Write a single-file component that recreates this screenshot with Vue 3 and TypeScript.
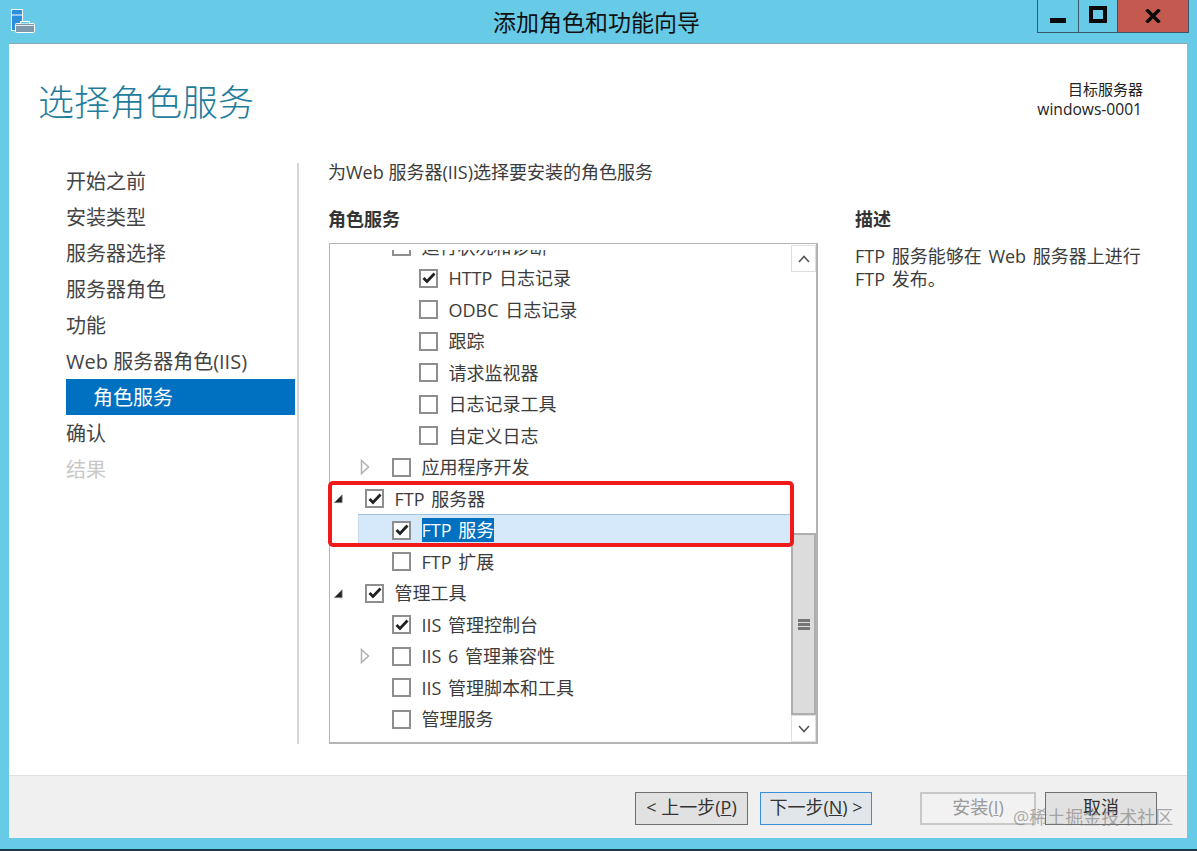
<script setup lang="ts">
interface TreeRow {
  label: string
  depth: number
  arrow?: 'open' | 'closed'
  checked?: boolean
  selected?: boolean
}

const navItems = [
  { label: '开始之前' },
  { label: '安装类型' },
  { label: '服务器选择' },
  { label: '服务器角色' },
  { label: '功能' },
  { label: 'Web 服务器角色(IIS)' },
  { label: '角色服务', active: true },
  { label: '确认' },
  { label: '结果', disabled: true },
]

const rows: TreeRow[] = [
  { label: '运行状况和诊断', depth: 1, arrow: undefined },
  { label: 'HTTP 日志记录', depth: 2, checked: true },
  { label: 'ODBC 日志记录', depth: 2 },
  { label: '跟踪', depth: 2 },
  { label: '请求监视器', depth: 2 },
  { label: '日志记录工具', depth: 2 },
  { label: '自定义日志', depth: 2 },
  { label: '应用程序开发', depth: 1, arrow: 'closed' },
  { label: 'FTP 服务器', depth: 0, arrow: 'open', checked: true },
  { label: 'FTP 服务', depth: 1, checked: true, selected: true },
  { label: 'FTP 扩展', depth: 1 },
  { label: '管理工具', depth: 0, arrow: 'open', checked: true },
  { label: 'IIS 管理控制台', depth: 1, checked: true },
  { label: 'IIS 6 管理兼容性', depth: 1, arrow: 'closed' },
  { label: 'IIS 管理脚本和工具', depth: 1 },
  { label: '管理服务', depth: 1 },
]

const rowIndent = (r: TreeRow) => ({ marginLeft: `${27 * r.depth + 1}px` })
</script>

<template>
  <div class="window">
    <header class="titlebar">
      <svg class="app-icon" width="26" height="26" viewBox="0 0 26 26">
        <rect x="1.5" y="0.5" width="11" height="21" fill="#2b8fdc" stroke="#fff" />
        <line x1="2" y1="6" x2="12" y2="6" stroke="#fff" />
        <rect x="5.5" y="14.5" width="19" height="9" rx="1" fill="#8098ab" stroke="#fff" />
        <path d="M10.500 14.500 V12.500 H19.500 V14.500" fill="#67cbe8" stroke="#fff" />
        <line x1="6" y1="16.500" x2="24" y2="16.500" stroke="#fff" stroke-width="0.8" />
      </svg>
      <div class="window-title">添加角色和功能向导</div>
      <div class="controls">
        <div class="ctl ctl-min"><span class="min-glyph"></span></div>
        <div class="ctl ctl-max"><span class="max-glyph"></span></div>
        <div class="ctl ctl-close">
          <svg width="16" height="14" viewBox="0 0 16 14">
            <path d="M1.500 0.500 L14.500 13.500 M14.500 0.500 L1.500 13.500" stroke="#0a0a0a" stroke-width="3.400" />
          </svg>
        </div>
      </div>
    </header>

    <div class="client">
      <div class="page">
        <div class="page-head">
          <h1 class="page-title">选择角色服务</h1>
          <div class="target">
            <div class="target-label">目标服务器</div>
            <div class="target-name">windows-0001</div>
          </div>
        </div>

        <div class="cols">
          <nav class="nav">
            <div
              v-for="item in navItems"
              :key="item.label"
              class="nav-item"
              :class="{ active: item.active, disabled: item.disabled }"
            >{{ item.label }}</div>
          </nav>

          <section class="content">
            <div class="instruction">为Web 服务器(IIS)选择要安装的角色服务</div>
            <div class="heading">角色服务</div>
            <div class="tree-box">
              <div class="tree-view">
                <div class="tree-rows">
                  <div
                    v-for="r in rows"
                    :key="r.label"
                    class="row"
                    :class="{ selected: r.selected }"
                    :style="rowIndent(r)"
                  >
                    <span class="arrow-slot">
                      <svg v-if="r.arrow === 'open'" width="11" height="11" viewBox="0 0 11 11">
                        <path d="M10 1.500 V10 H1.500 Z" fill="#222" stroke="#777" />
                      </svg>
                      <svg v-else-if="r.arrow === 'closed'" width="10" height="16" viewBox="0 0 10 16">
                        <path d="M1.500 1.500 L8.500 8 L1.500 14.500 Z" fill="#fff" stroke="#b0b0b0" stroke-width="1.500" />
                      </svg>
                    </span>
                    <span class="check">
                      <svg v-if="r.checked" width="14" height="12" viewBox="0 0 14 12">
                        <path d="M1.500 6 L5 9.500 L12.500 1.500" fill="none" stroke="#222" stroke-width="2.800" />
                      </svg>
                    </span>
                    <span class="row-label">{{ r.label }}</span>
                  </div>
                </div>
              </div>
              <div class="scrollbar">
                <div class="sb-btn sb-up">
                  <svg width="12" height="8" viewBox="0 0 12 8">
                    <path d="M1 7 L6 1.500 L11 7" fill="none" stroke="#555" stroke-width="1.600" />
                  </svg>
                </div>
                <div class="sb-track">
                  <div class="sb-thumb">
                    <span class="grip"></span>
                    <span class="grip"></span>
                    <span class="grip"></span>
                  </div>
                </div>
                <div class="sb-btn sb-down">
                  <svg width="12" height="8" viewBox="0 0 12 8">
                    <path d="M1 1 L6 6.500 L11 1" fill="none" stroke="#555" stroke-width="1.600" />
                  </svg>
                </div>
              </div>
              <div class="callout"></div>
            </div>
          </section>

          <aside class="desc">
            <div class="heading desc-heading">描述</div>
            <p class="desc-text">FTP 服务能够在 Web 服务器上进行 FTP 发布。</p>
          </aside>
        </div>
      </div>

      <footer class="footer">
        <button class="btn prev">&lt; 上一步(<u>P</u>)</button>
        <button class="btn next">下一步(<u>N</u>) &gt;</button>
        <button class="btn install" disabled>安装(<u>I</u>)</button>
        <button class="btn cancel">取消</button>
        <div class="watermark">@稀土掘金技术社区</div>
      </footer>
    </div>
    <div class="bottom-edge"></div>
  </div>
</template>

<style>
html, body { margin: 0; padding: 0; background: #67cbe8; }
</style>

<style scoped>
.window {
  width: 1197px;
  height: 851px;
  display: flex;
  flex-direction: column;
  background: #67cbe8;
  overflow: hidden;
  font-family: "Open Sans", "Noto Sans CJK SC", "Noto Sans", sans-serif;
  color: #3c3c3c;
}
.titlebar {
  height: 44px;
  flex: none;
  display: flex;
  align-items: flex-start;
  position: relative;
}
.app-icon { margin: 9px 0 0 10px; flex: none; }
.window-title {
  position: absolute;
  left: 0;
  right: 4px;
  top: 6px;
  text-align: center;
  font-size: 23px;
  line-height: 32px;
  color: #111;
}
.controls {
  margin-left: auto;
  margin-right: 8px;
  display: flex;
  height: 32px;
  border: 1px solid #35596b;
  border-top: none;
  position: relative;
}
.ctl {
  display: flex;
  align-items: center;
  justify-content: center;
  box-sizing: border-box;
}
.ctl-min { width: 41px; border-right: 1px solid #35596b; }
.ctl-max { width: 39px; border-right: 1px solid #35596b; }
.ctl-close { width: 70px; background: #c4594f; }
.min-glyph {
  width: 16px;
  height: 5px;
  background: #0a0a0a;
  margin-top: 9px;
}
.max-glyph {
  width: 18px;
  height: 17px;
  box-sizing: border-box;
  border: 4px solid #0a0a0a;
  margin-top: -3px;
}
.client {
  flex: none;
  height: 794px;
  margin: 0 10px 0 9px;
  display: flex;
  flex-direction: column;
  background: #fff;
  box-shadow: 0 -1px 0 #8aa8b5;
}
.page { flex: 1; display: flex; flex-direction: column; min-height: 0; }
.page-head {
  height: 119px;
  flex: none;
  box-sizing: border-box;
  display: flex;
  justify-content: space-between;
  padding: 34px 44px 0 29px;
}
.page-title {
  margin: 0;
  font-size: 36px;
  line-height: 50px;
  font-weight: 300;
  color: #1f7c9c;
}
.target {
  padding-top: 1px;
  text-align: right;
  font-size: 15px;
  line-height: 20px;
  color: #222;
}
.target-name { font-size: 15.6px; margin-right: 1px; }
.cols {
  flex: 1;
  display: flex;
  padding: 0 0 31px 57px;
  min-height: 0;
}
.nav {
  width: 233px;
  flex: none;
  border-right: 2px solid #d6d6d6;
  box-sizing: border-box;
}
.nav-item {
  width: 229px;
  height: 36px;
  line-height: 38px;
  font-size: 20px;
  color: #444;
  white-space: nowrap;
  box-sizing: border-box;
}
.nav-item.active {
  background: #0070c0;
  color: #fff;
  padding-left: 27px;
}
.nav-item.disabled { color: #c8c8c8; }
.content {
  width: 489px;
  flex: none;
  margin-left: 30px;
  display: flex;
  flex-direction: column;
}
.instruction {
  height: 44px;
  line-height: 18px;
  margin-left: -1px;
  font-size: 18px;
  color: #3c3c3c;
}
.heading {
  font-size: 18px;
  line-height: 24px;
  font-weight: 700;
  color: #333;
  height: 36px;
  margin-left: -1px;
}
.tree-box {
  flex: 1;
  min-height: 0;
  display: flex;
  border: 2px solid #b4b4b4;
  border-left-width: 1px;
  border-top-width: 1px;
  position: relative;
  background: #fff;
  box-sizing: border-box;
}
.tree-view {
  flex: 1;
  overflow: hidden;
  min-width: 0;
  clip-path: inset(6px 0 0 0);
}
.tree-rows { margin-top: -13.2px; }
.row {
  height: 31.5px;
  display: flex;
  align-items: center;
  padding-left: 2px;
  box-sizing: border-box;
}
.row.selected {
  background: #d6e9fb;
  box-shadow: inset 0 1px 0 #a0c0dc, inset 1px 0 0 #c8dcee;
}
.arrow-slot {
  width: 10px;
  height: 16px;
  flex: none;
  display: flex;
  align-items: center;
  justify-content: center;
}
.check {
  width: 19px;
  height: 19px;
  margin-left: 22px;
  flex: none;
  box-sizing: border-box;
  border: 2px solid #8e8e8e;
  background: #fff;
  display: flex;
  align-items: center;
  justify-content: center;
}
.row-label {
  margin-left: 10.5px;
  font-size: 18px;
  line-height: 24px;
  word-spacing: 2px;
  color: #3c3c3c;
  white-space: nowrap;
}
.row.selected .row-label {
  background: #0070c0;
  color: #fff;
}
.scrollbar {
  width: 25px;
  flex: none;
  display: flex;
  flex-direction: column;
  padding-top: 1px;
  box-sizing: border-box;
}
.sb-btn {
  height: 27px;
  flex: none;
  box-sizing: border-box;
  border: 1px solid #dedede;
  display: flex;
  align-items: center;
  justify-content: center;
  background: #fff;
}
.sb-track { flex: 1; display: flex; flex-direction: column; justify-content: flex-end; }
.sb-thumb {
  height: 182px;
  box-sizing: border-box;
  background: #dcdcdc;
  border: 2px solid #aeaeae;
  display: flex;
  flex-direction: column;
  align-items: center;
  justify-content: center;
  gap: 1px;
}
.grip { width: 12px; height: 3px; background: #767676; }
.callout {
  position: absolute;
  left: -2px;
  top: 237px;
  width: 466px;
  height: 66px;
  box-sizing: border-box;
  border: 4px solid #f01a1a;
  border-radius: 5px;
  pointer-events: none;
}
.desc { margin-left: 37px; width: 290px; padding-top: 44px; }
.desc-heading { height: 38px; margin-left: 0; }
.desc-text {
  margin: 0;
  font-size: 18px;
  line-height: 23px;
  word-spacing: 2px;
  color: #3c3c3c;
}
.footer {
  height: 63px;
  flex: none;
  box-sizing: border-box;
  border-top: 1px solid #dfdfdf;
  background: #f0f0f0;
  display: flex;
  align-items: flex-start;
  padding: 16px 0 0 626px;
  position: relative;
}
.btn {
  height: 33px;
  box-sizing: border-box;
  font: inherit;
  font-size: 18px;
  line-height: 24px;
  padding: 0 0 3px;
  color: #333;
  background: #e1e1e1;
  border: 1px solid #6f6f6f;
  white-space: nowrap;
}
.prev { width: 113px; }
.next { width: 112px; margin-left: 12px; border-color: #3b8fd8; background: #e1e6ea; }
.install { width: 116px; margin-left: 48px; background: #f2f2f2; border-color: #c8c8c8; color: #9a9a9a; border-width: 2px; }
.cancel { width: 112px; margin-left: 9px; }
.watermark {
  position: absolute;
  left: 1004px;
  top: 29px;
  font-size: 18px;
  line-height: 24px;
  color: rgba(120, 120, 120, 0.6);
  white-space: nowrap;
}
.bottom-edge {
  margin-top: auto;
  height: 2px;
  background: #123c48;
}
</style>
